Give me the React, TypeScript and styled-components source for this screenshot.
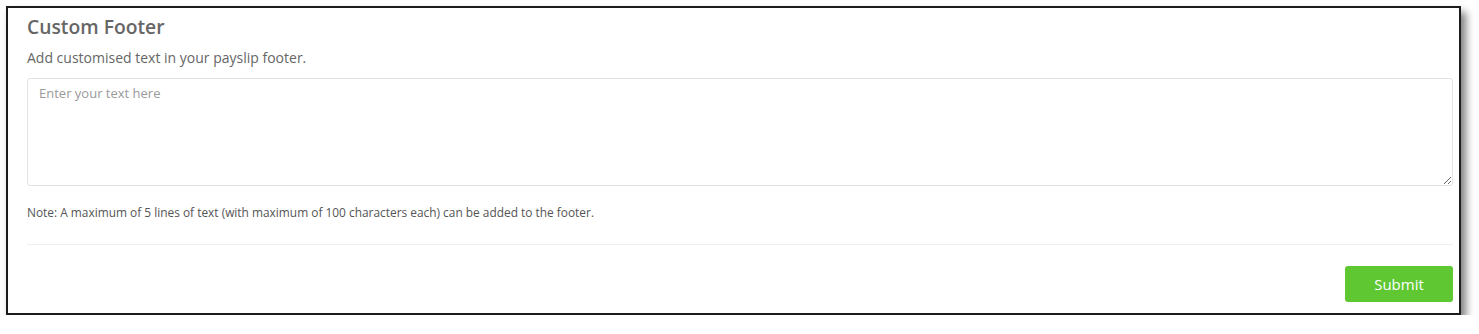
import React from "react";
import styled, { createGlobalStyle } from "styled-components";

const GlobalStyle = createGlobalStyle`
  html, body {
    margin: 0;
    padding: 0;
    background: #ffffff;
  }
  body {
    font-family: "Open Sans", "Noto Sans", "Liberation Sans", sans-serif;
  }
`;

const Page = styled.div`
  padding: 6px 0 0 6px;
`;

const Panel = styled.section`
  box-sizing: border-box;
  width: 1455px;
  height: 309px;
  border: 2px solid #1c1c1c;
  background: #ffffff;
  box-shadow: 5px 6px 8px rgba(0, 0, 0, 0.5);
  padding: 6px 6px 0 19px;
  display: flex;
  flex-direction: column;
`;

const Title = styled.h2`
  margin: 0;
  font-size: 19.3px;
  line-height: 25px;
  font-weight: 600;
  color: #666666;
`;

const Subtitle = styled.p`
  margin: 9px 0 0;
  font-size: 14px;
  line-height: 20px;
  color: #666666;
`;

const TextArea = styled.textarea`
  box-sizing: border-box;
  display: block;
  width: 100%;
  height: 108px;
  margin-top: 10px;
  padding: 5px 11px;
  border: 1px solid #e3e3e3;
  border-radius: 3px;
  font-family: inherit;
  font-size: 13px;
  line-height: 18px;
  color: #555555;
  resize: vertical;
  outline: none;
  &::placeholder {
    color: #9a9a9a;
  }
`;

const Note = styled.p`
  margin: 18px 0 0;
  font-size: 11.9px;
  line-height: 17px;
  color: #555555;
`;

const Divider = styled.hr`
  margin: 23px 0 0;
  border: 0;
  border-top: 1px solid #eeeeee;
  height: 0;
`;

const Actions = styled.div`
  display: flex;
  justify-content: flex-end;
  margin-top: 21px;
`;

const SubmitButton = styled.button`
  box-sizing: border-box;
  width: 108px;
  height: 36px;
  border: 0;
  border-radius: 3px;
  background: #5ec732;
  color: #ffffff;
  font-family: inherit;
  font-size: 15px;
  font-weight: 500;
  cursor: pointer;
`;

export default function App() {
  return (
    <>
      <GlobalStyle />
      <Page>
        <Panel>
          <Title>Custom Footer</Title>
          <Subtitle>Add customised text in your payslip footer.</Subtitle>
          <TextArea placeholder="Enter your text here" />
          <Note>
            Note: A maximum of 5 lines of text (with maximum of 100 characters each) can be added to the footer.
          </Note>
          <Divider />
          <Actions>
            <SubmitButton type="button">Submit</SubmitButton>
          </Actions>
        </Panel>
      </Page>
    </>
  );
}
